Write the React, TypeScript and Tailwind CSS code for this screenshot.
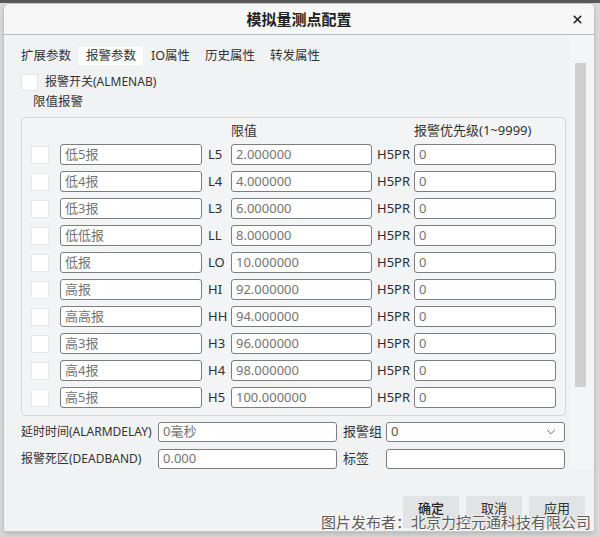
import { ChevronDown, X } from "lucide-react"

const rows = [
  { name: "低5报", code: "L5", value: "2.000000" },
  { name: "低4报", code: "L4", value: "4.000000" },
  { name: "低3报", code: "L3", value: "6.000000" },
  { name: "低低报", code: "LL", value: "8.000000" },
  { name: "低报", code: "LO", value: "10.000000" },
  { name: "高报", code: "HI", value: "92.000000" },
  { name: "高高报", code: "HH", value: "94.000000" },
  { name: "高3报", code: "H3", value: "96.000000" },
  { name: "高4报", code: "H4", value: "98.000000" },
  { name: "高5报", code: "H5", value: "100.000000" },
]

const tabs = ["扩展参数", "报警参数", "IO属性", "历史属性", "转发属性"]

const Field = ({ text, w, h = "h-[21px]" }: { text: string; w: string; h?: string }) => (
  <div
    className={`${w} ${h} flex items-center overflow-hidden whitespace-nowrap rounded-[3px] border border-[#7d7d7d] bg-white pl-[4px] text-[13px] text-[#747474]`}
  >
    {text}
  </div>
)

const App = () => {
  return (
    <div
      className="relative h-[537px] w-[600px] overflow-hidden bg-[#d9d9d9] pl-[3px] pt-[3px]"
      style={{ fontFamily: '"Noto Sans", "Noto Sans CJK SC", sans-serif' }}
    >
      {/* dark strip above the dialog */}
      <div className="absolute left-0 top-0 h-[3px] w-full bg-[#5a5a5a]" />

      <div className="flex h-[529px] w-[592px] flex-col overflow-hidden rounded-t-[6px] border border-[#c4c4c4] bg-[#f1f2f4] shadow-md">
        {/* title bar */}
        <div className="relative flex h-[31px] shrink-0 items-center justify-center border-b border-[#bcbcbc] bg-[#f7f7f7]">
          <span className="text-[15px] font-bold text-[#222]">模拟量测点配置</span>
          <X className="absolute right-[10px] top-[9px] h-[13px] w-[13px] text-[#222]" strokeWidth={3} />
        </div>

        <div className="flex">
          {/* content */}
          <div className="flex w-[566px] flex-col pl-[17px] pt-[12px] text-[13px] text-[#333]">
            <div className="-ml-[7px] flex h-[18px] items-center gap-[1px]">
              {tabs.map((t, i) => (
                <div
                  key={t}
                  className={`flex h-[18px] items-center px-[7px] text-[12.5px] ${i === 1 ? "bg-white" : ""}`}
                >
                  {t}
                </div>
              ))}
            </div>

            <div className="mt-[8px] flex h-[18px] items-center">
              <div className="h-[17px] w-[17px] border border-[#e4e4e4] bg-white" />
              <span className="ml-[7px] text-[12px]">报警开关(ALMENAB)</span>
            </div>

            <div className="ml-[12px] mt-[3px] flex h-[17px] items-center text-[12.5px]">限值报警</div>

            {/* limit group */}
            <div className="mt-[6px] w-[545px] rounded-[4px] border border-[#d6d7d9] bg-[#f3f4f6] pb-[7px] pl-[9px] pt-[4px]">
              <div className="flex h-[17px] items-center">
                <div className="w-[200px]" />
                <div className="w-[183px]">限值</div>
                <div>报警优先级(1~9999)</div>
              </div>
              <div className="mt-[5px] flex flex-col gap-[6px]">
                {rows.map((r) => (
                  <div key={r.code} className="flex h-[21px] items-center">
                    <div className="h-[18px] w-[18px] border border-[#e8e8e8] bg-white" />
                    <div className="ml-[11px]">
                      <Field text={r.name} w="w-[142px]" />
                    </div>
                    <div className="w-[29px] pl-[6px] text-[#2f2f2f]">{r.code}</div>
                    <Field text={r.value} w="w-[141px]" />
                    <div className="w-[42px] pl-[5px] text-[#2f2f2f]">H5PR</div>
                    <Field text="0" w="w-[142px]" />
                  </div>
                ))}
              </div>
            </div>

            {/* bottom fields */}
            <div className="mt-[6px] flex flex-col gap-[7px]">
              <div className="flex h-[20px] items-center">
                <div className="w-[137px] whitespace-nowrap text-[12px]">延时时间(ALARMDELAY)</div>
                <Field text="0毫秒" w="w-[179px]" h="h-[20px]" />
                <div className="w-[49px] pl-[6px]">报警组</div>
                <div className="flex h-[20px] w-[179px] items-center justify-between rounded-[3px] border border-[#7d7d7d] bg-white pl-[4px] pr-[6px] text-[13px] text-[#555]">
                  <span>0</span>
                  <ChevronDown className="h-[14px] w-[14px] text-[#555]" strokeWidth={1.5} />
                </div>
              </div>
              <div className="flex h-[20px] items-center">
                <div className="w-[137px] whitespace-nowrap text-[12px]">报警死区(DEADBAND)</div>
                <Field text="0.000" w="w-[179px]" h="h-[20px]" />
                <div className="w-[49px] pl-[6px]">标签</div>
                <Field text="" w="w-[179px]" h="h-[20px]" />
              </div>
            </div>
          </div>

          {/* scrollbar */}
          <div className="flex w-[24px] justify-center bg-[#f4f5f6] pt-[28px]">
            <div className="ml-[-4px] h-[324px] w-[11px] bg-[#cfcfcf]" />
          </div>
        </div>

        {/* buttons */}
        <div className="mt-[27px] flex justify-end gap-[7px] pr-[9px]">
          {["确定", "取消", "应用"].map((b, i) => (
            <div
              key={b}
              className={`flex h-[32px] w-[56px] items-start justify-center bg-[#e2e3e4] pt-[3px] text-[13px] ${i === 0 ? "font-medium text-[#222]" : "text-[#333]"}`}
            >
              {b}
            </div>
          ))}
        </div>
      </div>

      {/* watermark */}
      <div className="absolute bottom-[6px] right-[9px] text-[15px] leading-[18px] text-[#5c5c5c] [text-shadow:0_0_2px_#ffffff,0_0_2px_#ffffff]">
        图片发布者：北京力控元通科技有限公司
      </div>
    </div>
  )
}

export default App
